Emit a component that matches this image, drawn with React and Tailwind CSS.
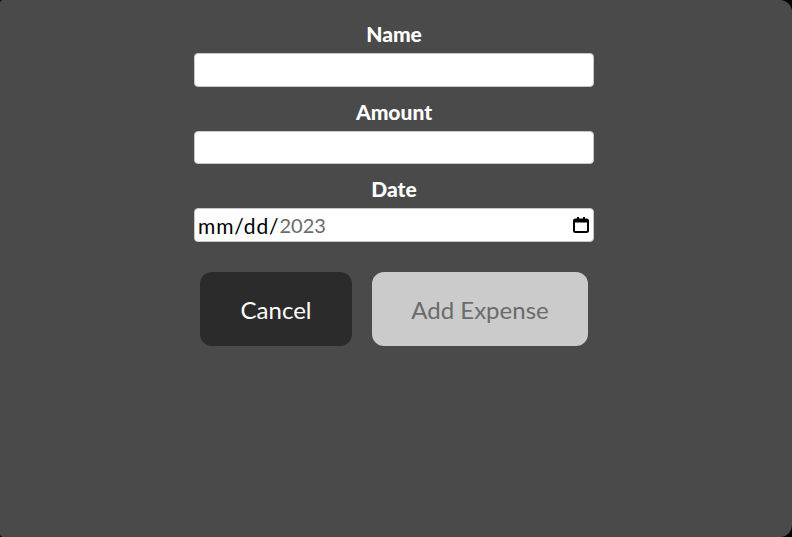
import React from "react";

function CalendarIcon() {
  return (
    <svg width="18" height="18" viewBox="0 0 18 18" fill="none">
      <rect x="2" y="3.5" width="14" height="12.5" rx="1.5" stroke="#000" strokeWidth="2" />
      <rect x="2" y="3.5" width="14" height="3" fill="#000" />
      <rect x="5" y="1" width="2" height="3" fill="#000" />
      <rect x="11" y="1" width="2" height="3" fill="#000" />
    </svg>
  );
}

export default function App() {
  return (
    <div className="w-[792px] h-[537px] bg-black" style={{ fontFamily: "Lato, 'Noto Sans', sans-serif" }}>
      <div className="w-full h-full bg-[#4a4a4a] rounded-tl-[3px] rounded-bl-[3px] rounded-r-[12px] pt-[22px]">
        <div className="ml-[194px] w-[400px] flex flex-col">
          <label className="text-center text-white font-black text-[21px] leading-[24px] mb-[7px]">Name</label>
          <div className="h-[34px] bg-white rounded-[4px] border border-[#c8c8c8]" />
          <label className="text-center text-white font-black text-[21px] leading-[24px] mt-[13px] mb-[7px]">Amount</label>
          <div className="h-[33px] bg-white rounded-[4px] border border-[#c8c8c8]" />
          <label className="text-center text-white font-black text-[21px] leading-[24px] mt-[13px] mb-[7px]">Date</label>
          <div className="h-[34px] bg-white rounded-[4px] border border-[#c8c8c8] flex items-center pl-[3px] pr-[3px]">
            <span className="text-[21px] leading-none text-black tracking-[0.9px]">mm/dd/</span>
            <span className="text-[20px] leading-none text-[#6b6b6b]">2023</span>
            <span className="ml-auto flex"><CalendarIcon /></span>
          </div>
          <div className="flex justify-center gap-[20px] mt-[30px]">
            <button className="w-[152px] h-[74px] rounded-[12px] bg-[#2b2b2b] text-white text-[24px] pt-[2px]">Cancel</button>
            <button className="w-[216px] h-[74px] rounded-[12px] bg-[#cbcbcb] text-[#6b6b6b] text-[24px] pt-[2px]">Add Expense</button>
          </div>
        </div>
      </div>
    </div>
  );
}
